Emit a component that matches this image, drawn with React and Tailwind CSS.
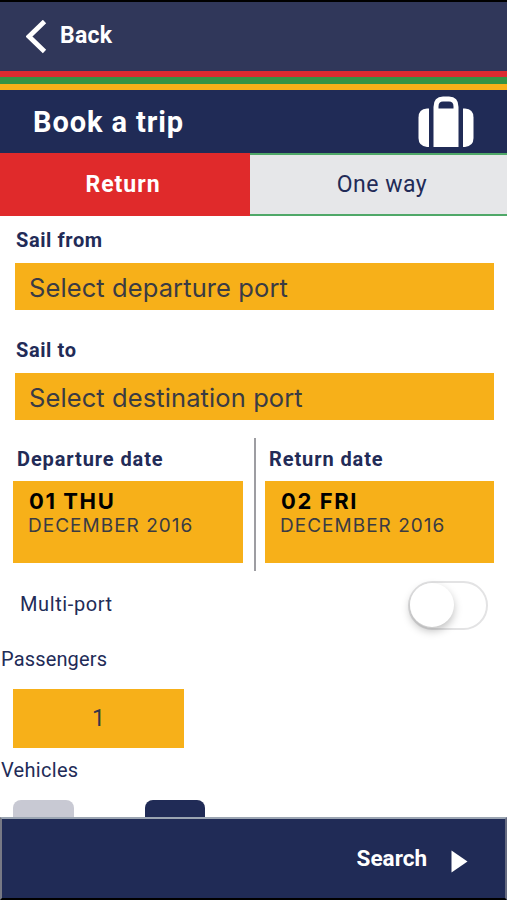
import React, { useState } from 'react';

const tabs = [
  { label: 'Return', value: 'return' },
  { label: 'One way', value: 'oneway' },
];

const ports = [
  { label: 'Sail from', placeholder: 'Select departure port' },
  { label: 'Sail to', placeholder: 'Select destination port' },
];

const SuitcaseIcon = () => (
  <svg width="56" height="52" viewBox="0 0 56 52" fill="#fff">
    <path d="M11 12.5V51H9Q0.5 50 0.5 42V21.5Q0.5 13 9 12.5Z" />
    <path
      fillRule="evenodd"
      d="M15.5 51V11Q15.5 0.5 25 0.5H31Q40.5 0.5 40.5 11V51ZM20.5 12.5H35.5V10.5Q35.5 5.5 31 5.5H25Q20.5 5.5 20.5 10.5Z"
    />
    <path d="M45 12.5V51H47Q55.5 50 55.5 42V21.5Q55.5 13 47 12.5Z" />
  </svg>
);

const DateCard = ({ title, day, month }) => (
  <div>
    <p className="h-[43px] pt-[8px] pl-[4px] text-[20px] leading-[27px] font-bold tracking-[0.9px] whitespace-nowrap text-[#222b57]">
      {title}
    </p>
    <button className="block h-[82px] w-full bg-[#f7b019] pl-[15px] text-left font-['Inter',sans-serif] whitespace-nowrap">
      <span className="-mt-[18px] block pl-px text-[22px] leading-[24px] font-bold tracking-[1.6px] text-black">
        {day}
      </span>
      <span className="block text-[19px] leading-[25px] tracking-[1.02px] text-[#3a3b44]">
        {month}
      </span>
    </button>
  </div>
);

const App = () => {
  const [trip, setTrip] = useState('return');
  const [multiPort, setMultiPort] = useState(false);

  return (
    <div className="flex h-[900px] w-[507px] flex-col overflow-hidden bg-white font-['Roboto',sans-serif] text-[#222b57]">
      <header className="flex h-[71px] shrink-0 items-center border-t-2 border-black bg-[#30375a] pl-[26px] text-white">
        <svg width="21" height="34" viewBox="0 0 21 34" fill="none" stroke="#fff" strokeWidth="4.8">
          <path d="M18.5 1.5L3 16.5L18.5 31.5" />
        </svg>
        <span className="ml-[13px] text-[23px] font-bold tracking-[0.3px]">Back</span>
      </header>
      <div className="h-[6px] shrink-0 bg-[#dc2b30]"></div>
      <div className="h-[7px] shrink-0 bg-[#359344]"></div>
      <div className="h-[6px] shrink-0 bg-[#f7b019]"></div>

      <div className="flex h-[63px] shrink-0 items-center justify-between bg-[#202b56] pr-[33px] pl-[33px] text-white">
        <h1 className="text-[29px] leading-[40px] font-bold tracking-[0.9px]">Book a trip</h1>
        <SuitcaseIcon />
      </div>

      <div className="flex h-[63px] shrink-0">
        {tabs.map((tab) => (
          <button
            key={tab.value}
            onClick={() => setTrip(tab.value)}
            className={
              trip === tab.value
                ? 'w-[250px] bg-[#e02a2b] pt-[2px] pr-1 text-[23px] font-bold tracking-[1px] text-white'
                : 'flex-1 border-y-2 border-[#4fa868] bg-[#e6e7e9] pt-[2px] pl-[7px] text-[23px] tracking-[0.5px] text-[#222b57]'
            }
          >
            {tab.label}
          </button>
        ))}
      </div>

      <div className="shrink-0 pt-px">
        {ports.map((port) => (
          <div key={port.label} className="h-[110px] pr-[13px] pl-[15px]">
            <p className="h-[46px] pt-[9px] pl-px text-[20px] leading-[28px] font-bold tracking-[0.6px]">
              {port.label}
            </p>
            <button className="block h-[47px] w-full bg-[#f7b019] pt-[3px] pl-[14px] text-left font-['Inter',sans-serif] text-[25.5px] tracking-[0.1px] text-[#3a3b44]">
              {port.placeholder}
            </button>
          </div>
        ))}
      </div>

      <div className="mt-px flex h-[134px] shrink-0 pl-[13px]">
        <div className="w-[230px]">
          <DateCard title="Departure date" day="01 THU" month="DECEMBER 2016" />
        </div>
        <div className="mr-[9px] ml-[11px] h-[133px] w-[2px] bg-[#9d9da2]"></div>
        <div className="w-[229px]">
          <DateCard title="Return date" day="02 FRI" month="DECEMBER 2016" />
        </div>
      </div>

      <div className="flex h-[66px] shrink-0 items-center justify-between pr-[19px] pl-[20px]">
        <span className="-mt-[2px] text-[20px] tracking-[0.6px]">Multi-port</span>
        <button
          onClick={() => setMultiPort(!multiPort)}
          className={`flex h-[49px] w-[80px] items-center rounded-full border-2 border-[#e3e3e4] ${
            multiPort ? 'justify-end bg-[#359344]' : 'bg-white'
          }`}
        >
          <span className="size-[44px] rounded-full bg-white shadow-[0_4px_8px_rgba(0,0,0,0.25)]"></span>
        </button>
      </div>

      <p className="h-[51px] shrink-0 pt-[7px] pl-px text-[20px] leading-[28px] tracking-[0.15px]">
        Passengers
      </p>
      <button className="ml-[13px] h-[59px] w-[171px] shrink-0 bg-[#f7b019] pt-px text-[23px] text-[#33374a]">
        1
      </button>
      <p className="h-[52px] shrink-0 pt-[8px] pl-px text-[20px] leading-[28px] tracking-[0.3px]">
        Vehicles
      </p>
      <div className="flex h-[17px] shrink-0 gap-[71px] pl-[13px]">
        <div className="w-[61px] rounded-t-[8px] bg-[#c8c9d3]"></div>
        <div className="w-[60px] rounded-t-[8px] bg-[#202b56]"></div>
      </div>

      <footer className="flex h-[83px] shrink-0 items-center justify-end border-2 border-t-[#9ba5b2] border-r-[#666b80] border-b-black border-l-[#777985] bg-[#202b56] pr-[37px] text-white">
        <span className="text-[22.5px] font-bold">Search</span>
        <svg className="mt-[5px] ml-[24px]" width="17" height="23" viewBox="0 0 17 23" fill="#fff">
          <path d="M0.5 0.5L16.5 11.5L0.5 22.5Z" />
        </svg>
      </footer>
    </div>
  );
};

export default App;
